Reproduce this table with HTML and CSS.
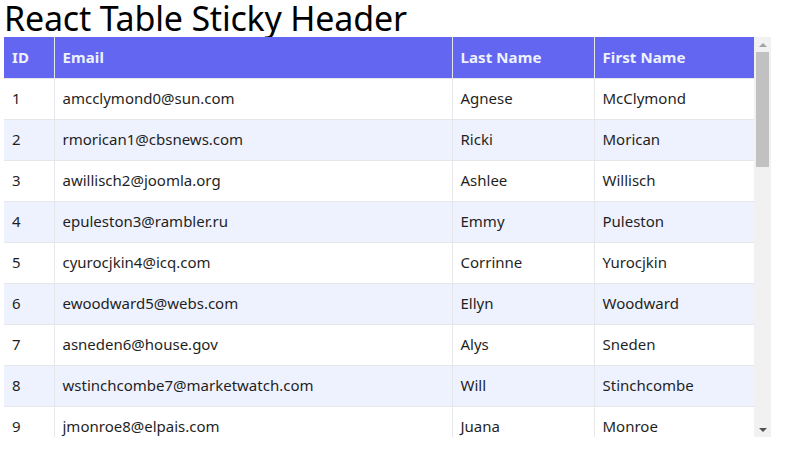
FILE: index.html
```html
<!DOCTYPE html>
<html>
<head>
<meta charset="utf-8">
<link rel="stylesheet" href="styles.css">
</head>
<body>
<h1 class="title">React Table Sticky Header</h1>
<div class="frame">
  <div class="viewport">
    <table class="grid">
      <colgroup>
        <col class="c-id"><col class="c-email"><col class="c-last"><col class="c-first">
      </colgroup>
      <thead>
        <tr><th>ID</th><th>Email</th><th>Last Name</th><th>First Name</th></tr>
      </thead>
      <tbody>
        <tr><td>1</td><td>amcclymond0@sun.com</td><td>Agnese</td><td>McClymond</td></tr>
        <tr><td>2</td><td>rmorican1@cbsnews.com</td><td>Ricki</td><td>Morican</td></tr>
        <tr><td>3</td><td>awillisch2@joomla.org</td><td>Ashlee</td><td>Willisch</td></tr>
        <tr><td>4</td><td>epuleston3@rambler.ru</td><td>Emmy</td><td>Puleston</td></tr>
        <tr><td>5</td><td>cyurocjkin4@icq.com</td><td>Corrinne</td><td>Yurocjkin</td></tr>
        <tr><td>6</td><td>ewoodward5@webs.com</td><td>Ellyn</td><td>Woodward</td></tr>
        <tr><td>7</td><td>asneden6@house.gov</td><td>Alys</td><td>Sneden</td></tr>
        <tr><td>8</td><td>wstinchcombe7@marketwatch.com</td><td>Will</td><td>Stinchcombe</td></tr>
        <tr><td>9</td><td>jmonroe8@elpais.com</td><td>Juana</td><td>Monroe</td></tr>
      </tbody>
    </table>
  </div>
  <div class="scrollbar">
    <div class="arrow up"></div>
    <div class="track"><div class="thumb"></div></div>
    <div class="arrow down"></div>
  </div>
</div>
</body>
</html>
```
FILE: styles.css
```css
html, body {
  margin: 0;
  padding: 0;
  background: #fff;
}
body {
  padding: 0 4px;
  font-family: "Noto Sans", "Open Sans", sans-serif;
  color: #1f1f1f;
}
.title {
  margin: 0;
  font-size: 34px;
  font-weight: 400;
  line-height: 37px;
  color: #000;
  letter-spacing: -0.2px;
}
.frame {
  display: flex;
  width: 767px;
  height: 400px;
}
.viewport {
  width: 750px;
  height: 400px;
  overflow: hidden;
}
.grid {
  width: 750px;
  border-collapse: collapse;
  table-layout: fixed;
  font-size: 15px;
}
.c-id { width: 50px; }
.c-email { width: 398px; }
.c-last { width: 142px; }
.c-first { width: 160px; }
.grid tr {
  height: 41px;
}
.grid th, .grid td {
  padding: 0 8px 1px;
  text-align: left;
  white-space: nowrap;
  border-left: 1px solid #e5e7eb;
  border-bottom: 1px solid #e5e7eb;
}
.grid th:first-child, .grid td:first-child {
  border-left: none;
}
.grid th {
  background: #6366f1;
  color: #eef2ff;
  font-weight: 700;
  font-size: 15px;
  letter-spacing: 0.1px;
}
.grid tbody tr:nth-child(even) td {
  background: #eef2ff;
}
.scrollbar {
  width: 17px;
  height: 400px;
  background: #f1f1f1;
  display: flex;
  flex-direction: column;
}
.arrow {
  height: 15px;
  display: flex;
  align-items: center;
  justify-content: center;
}
.arrow::before {
  content: "";
  width: 0;
  height: 0;
  border-left: 4px solid transparent;
  border-right: 4px solid transparent;
}
.arrow.up::before {
  border-bottom: 4px solid #a3a3a3;
}
.arrow.down::before {
  border-top: 4px solid #505050;
}
.track {
  flex: 1;
  padding: 0 2px;
}
.thumb {
  height: 115px;
  background: #c1c1c1;
}
```
